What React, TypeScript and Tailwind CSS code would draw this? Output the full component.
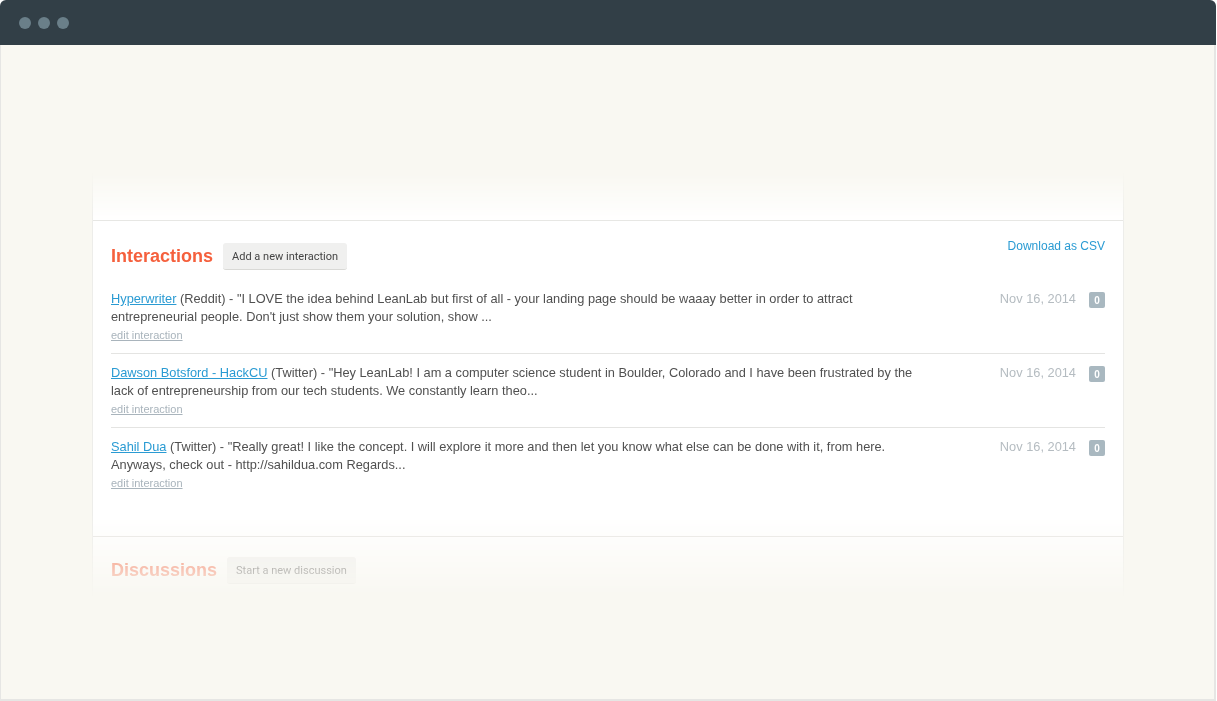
import React from "react";

type Interaccion = {
  autor: string;
  fuente: string;
  texto: string;
  fecha: string;
  votos: number;
};

const interacciones: Interaccion[] = [
  {
    autor: "Hyperwriter",
    fuente: "Reddit",
    texto:
      "\"I LOVE the idea behind LeanLab but first of all - your landing page should be waaay better in order to attract entrepreneurial people. Don't just show them your solution, show ...",
    fecha: "Nov 16, 2014",
    votos: 0,
  },
  {
    autor: "Dawson Botsford - HackCU",
    fuente: "Twitter",
    texto:
      "\"Hey LeanLab! I am a computer science student in Boulder, Colorado and I have been frustrated by the lack of entrepreneurship from our tech students. We constantly learn theo...",
    fecha: "Nov 16, 2014",
    votos: 0,
  },
  {
    autor: "Sahil Dua",
    fuente: "Twitter",
    texto:
      "\"Really great! I like the concept. I will explore it more and then let you know what else can be done with it, from here. Anyways, check out - http://sahildua.com Regards...",
    fecha: "Nov 16, 2014",
    votos: 0,
  },
];

/**
 * Cabecera de cada seccion: titulo naranja + boton gris
 */
function Cabecera({ titulo, boton }: { titulo: string; boton: string }) {
  return (
    <div className="flex items-center">
      <h2 className="text-[18px] leading-[27px] font-bold text-[#f5603d] font-['Liberation_Sans',Arial,sans-serif]">
        {titulo}
      </h2>
      <button className="ml-[10px] h-[27px] px-[9px] pt-[2px] rounded-[3px] bg-[#f0f0ef] border-b border-[#d9d9d6] text-[11px] text-[#444] font-['Roboto',sans-serif]">
        {boton}
      </button>
    </div>
  );
}

export default function App() {
  return (
    <div className="w-[1216px] h-[701px] flex flex-col bg-white">
      {/* barra de ventana */}
      <div className="h-[45px] shrink-0 bg-[#323f47] rounded-t-[6px] flex items-center pl-[19px] gap-[7px]">
        <span className="w-[12px] h-[12px] rounded-full bg-[#6a7f89]" />
        <span className="w-[12px] h-[12px] rounded-full bg-[#6a7f89]" />
        <span className="w-[12px] h-[12px] rounded-full bg-[#6a7f89]" />
      </div>

      <div className="flex-1 bg-[#f9f8f2] border-l border-r-2 border-b-2 border-[#e6e6e4] pt-[127px] font-['Liberation_Sans',Arial,sans-serif]">
        <div className="ml-[91px] w-[1032px] h-[430px] overflow-hidden bg-white border-x border-[#ededea] [mask-image:linear-gradient(to_bottom,transparent_0px,#000_50px,#000_342px,transparent_426px)]">
          <div className="h-[49px] border-b border-[#e6e6e3]" />

          {/* Interacciones */}
          <section className="px-[18px] pt-[22px] pb-[36px] border-b border-[#e6e6e3]">
            <div className="flex justify-between items-start">
              <Cabecera titulo="Interactions" boton="Add a new interaction" />
              <a href="#" className="-mt-[5px] text-[12px] leading-[16px] text-[#2a9bd3]">
                Download as CSV
              </a>
            </div>

            <ul className="mt-[10px]">
              {interacciones.map((c, i) => (
                <li
                  key={i}
                  className={`flex justify-between pt-[10px] ${i < interacciones.length - 1 ? "pb-[9px] border-b border-[#e4e4e2]" : "pb-[8px]"}`}
                >
                  <div className="w-[815px]">
                    <p className="text-[12.8px] leading-[18px] text-[#505050]">
                      <a href="#" className="text-[#2a9bd3] underline">
                        {c.autor}
                      </a>{" "}
                      ({c.fuente}) - {c.texto}
                    </p>
                    <a href="#" className="block mt-[1px] text-[11px] leading-[17px] text-[#a9b4bc] underline">
                      edit interaction
                    </a>
                  </div>
                  <div className="flex items-start h-[18px]">
                    <span className="text-[12.8px] leading-[18px] text-[#b5bcc1]">{c.fecha}</span>
                    <span className="ml-[13px] mt-[2px] w-[16px] h-[16px] rounded-[2px] bg-[#a9b8c0] text-white text-[10px] font-bold flex items-center justify-center">
                      {c.votos}
                    </span>
                  </div>
                </li>
              ))}
            </ul>
          </section>

          {/* Discusiones */}
          <section className="px-[18px] pt-[20px] pb-[36px]">
            <Cabecera titulo="Discussions" boton="Start a new discussion" />
            <div className="mt-[9px] h-[60px]" />
          </section>
        </div>
      </div>
    </div>
  );
}
